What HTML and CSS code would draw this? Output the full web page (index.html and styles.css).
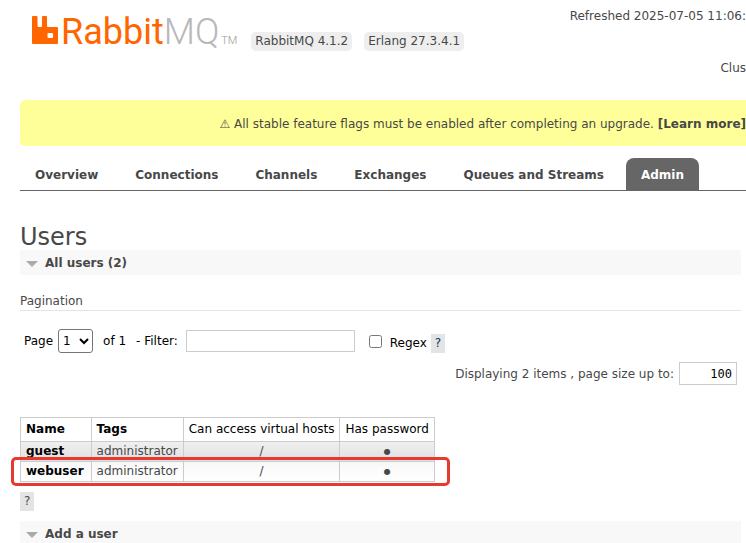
FILE: index.html
```html
<!DOCTYPE html>
<html lang="en">
<head>
<meta charset="utf-8">
<title>RabbitMQ Management</title>
<link rel="stylesheet" href="styles.css">
</head>
<body>
<header class="header">
  <a class="logo" href="#" aria-label="RabbitMQ">
    <svg class="logo-mark" viewBox="0 0 26 28" aria-hidden="true"><path fill="#f60" fill-rule="evenodd" d="M1 0H4.500Q5.500 0 5.500 1V10Q5.500 11 6.500 11H9Q10 11 10 10V1Q10 0 11 0H14Q15 0 15 1V10Q15 11 16 11H25Q26 11 26 12V27Q26 28 25 28H1Q0 28 0 27V1Q0 0 1 0ZM16.500 17Q15.500 17 15.500 18V21Q15.500 22 16.500 22H20Q21 22 21 21V18Q21 17 20 17Z"/></svg>
    <span class="logo-rabbit">Rabbit</span><span class="logo-mq">MQ</span><span class="logo-tm">TM</span>
  </a>
  <div class="versions"><span class="version">RabbitMQ 4.1.2</span><span class="version">Erlang 27.3.4.1</span></div>
  <div class="status">
    <span>Refreshed 2025-07-05 11:06:</span>
    <span>Clus</span>
  </div>
</header>
<p class="notice">⚠ All stable feature flags must be enabled after completing an upgrade. <a href="#">[Learn more]</a></p>
<nav class="tabs">
  <a href="#">Overview</a>
  <a href="#">Connections</a>
  <a href="#">Channels</a>
  <a href="#">Exchanges</a>
  <a href="#">Queues and Streams</a>
  <a href="#" class="active" aria-current="page">Admin</a>
</nav>
<main class="main">
  <h1>Users</h1>
  <h2 class="section">All users (2)</h2>
  <h3>Pagination</h3>
  <div class="filters">
    <label for="page">Page</label>
    <select id="page"><option>1</option></select>
    <span class="of">of 1</span>
    <label class="filter-label" for="filter">- Filter:</label>
    <input type="text" id="filter">
    <input type="checkbox" id="regex">
    <div class="regex-text">
      <label for="regex">Regex</label>
      <button class="help" type="button">?</button>
    </div>
  </div>
  <div class="page-size">
    <label for="size">Displaying 2 items , page size up to:</label>
    <input type="text" id="size" value="100">
  </div>
  <div class="users">
    <table>
      <thead><tr><th>Name</th><th>Tags</th><th class="plain">Can access virtual hosts</th><th class="plain">Has password</th></tr></thead>
      <tbody>
        <tr class="alt"><td><a href="#">guest</a></td><td>administrator</td><td class="c">/</td><td class="c"><span class="dot">●</span></td></tr>
        <tr><td><a href="#">webuser</a></td><td>administrator</td><td class="c">/</td><td class="c"><span class="dot">●</span></td></tr>
      </tbody>
    </table>
    <div class="highlight"></div>
  </div>
  <button class="help" type="button">?</button>
  <h2 class="section add">Add a user</h2>
</main>
</body>
</html>
```
FILE: styles.css
```css
* { box-sizing: border-box; }
html { overflow: hidden; }
body {
  margin: 0;
  padding-left: 20px;
  background: #fff;
  color: #484848;
  font: 12px/16px Verdana, "DejaVu Sans", sans-serif;
}
a { color: inherit; text-decoration: none; }
input, select, button { font: inherit; }

.header { display: flex; height: 100px; padding-top: 8px; }
.logo { display: flex; align-items: baseline; height: 42px; padding-left: 12px; font: 300 36px/48px Roboto, sans-serif; }
.logo-mark { width: 26px; height: 28px; margin-right: 3px; }
.logo-rabbit { color: #f60; font-weight: 400; }
.logo-mq { color: #b8b8b8; }
.logo-tm { margin-left: 2px; color: #999; font-size: 11px; }
.versions { display: flex; gap: 12px; align-items: flex-start; margin-left: 14px; padding-top: 24px; }
.version { padding: 2px 4px; border-radius: 5px; background: #eee; line-height: 15px; white-space: nowrap; }
.status { display: flex; flex-direction: column; gap: 36px; align-items: flex-end; margin-left: auto; white-space: nowrap; }

.notice { margin: 0; padding: 16px 0 14px; border-radius: 5px 0 0 5px; background: #ff9; text-align: right; white-space: nowrap; }
.notice a { font-weight: bold; }

.tabs { display: flex; gap: 7px; margin-top: 12px; border-bottom: 1px solid #666; font-weight: bold; white-space: nowrap; }
.tabs a { padding: 9px 15px 7px; }
.tabs .active { border-radius: 8px 8px 0 0; background: #666; color: #fff; }

h1 { margin: 33px 0 0; font-size: 24px; font-weight: normal; line-height: 26px; }
.main { padding-right: 5px; }
.section { display: flex; align-items: center; gap: 7px; margin: 0; padding: 5px 6px 3px; background: #f8f8f8; font-size: 12px; line-height: 17px; }
.section::before { content: ""; border: 6px solid transparent; border-top-color: #aaa; border-bottom: 0; }
h3 { margin: 18px 0 18px; border-bottom: 1px solid #e4e4e4; font-size: 12px; font-weight: normal; line-height: 17px; }

.filters { display: flex; align-items: center; gap: 5px; padding-left: 4px; color: #000; }
select { width: 35px; height: 24px; border: 1px solid #767676; border-radius: 3px; background: #fff; }
input[type="text"] { border: 1px solid #ccc; background: #fff; }
#filter { width: 169px; height: 22px; }
#regex { width: 13px; height: 13px; margin: 0 3px 0 9px; }
.of { margin: 0 5px; }
.filter-label { margin-right: 3px; }
.regex-text { display: flex; align-items: center; gap: 4px; padding-top: 4px; }
.help { padding: 1px 4px; border: 0; background: #e4e4e4; color: #484848; line-height: 17px; }
.filters .help { color: #003a6c; }

.page-size { display: flex; align-items: center; justify-content: flex-end; gap: 5px; margin: 9px 4px 32px 0; }
#size { width: 58px; height: 23px; padding: 0 4px; text-align: right; font: 12px "DejaVu Sans Mono", monospace; }

.users { position: relative; width: max-content; margin-bottom: 10px; }
table { border-collapse: collapse; }
th, td { border: 1px solid #ccc; padding: 1px 5px; line-height: 17px; text-align: left; }
th { padding: 3px 5px; color: #000; }
th:first-child, td:first-child { padding-right: 7px; }
.plain { font-weight: normal; }
td a { color: #000; font-weight: bold; }
td.c { text-align: center; }
.dot { font-size: 8px; line-height: 1; vertical-align: 1px; }
tbody tr { background: linear-gradient(#f8f8f8, #fff); }
tbody .alt { background: linear-gradient(#f0f0f0, #dedede); }
.highlight { position: absolute; inset: 40px -15px -4px -9px; border: 3px solid #e63a30; border-radius: 5px; }
.add { margin-top: 10px; }
```
